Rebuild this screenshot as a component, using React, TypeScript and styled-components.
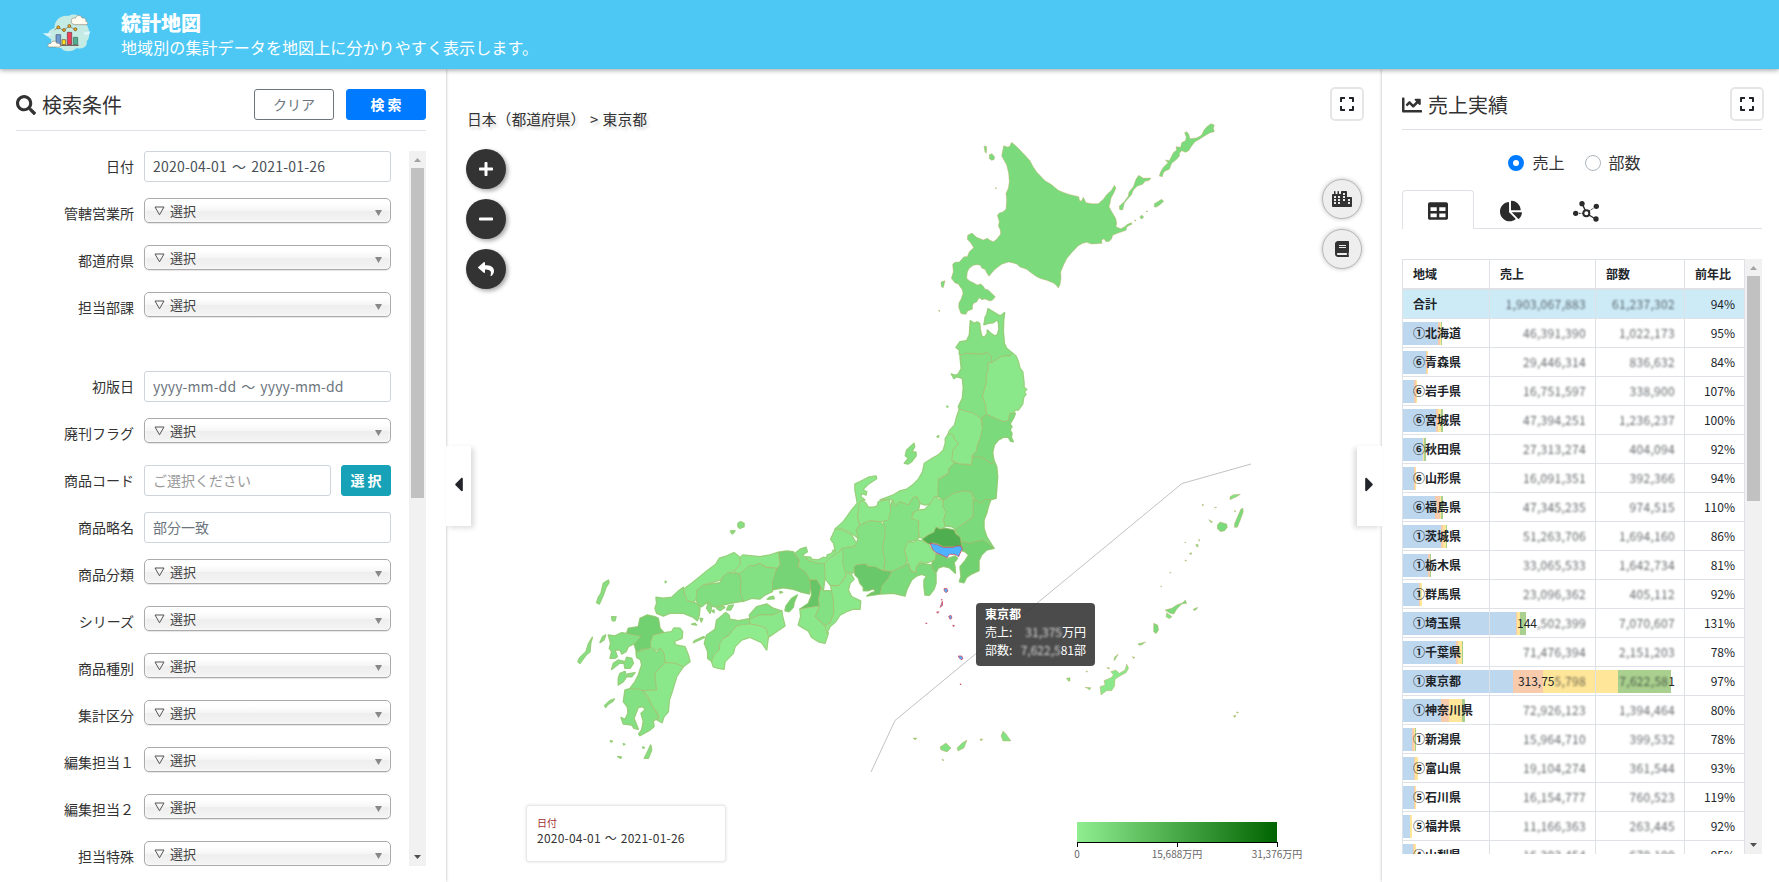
import React from 'react';
import styled, { createGlobalStyle } from 'styled-components';
import {
  FaSearch, FaPlus, FaMinus, FaReply, FaCity, FaBook, FaChartLine, FaTable,
  FaChartPie, FaExpand, FaCaretLeft, FaCaretRight,
} from 'react-icons/fa';

const Global = createGlobalStyle`
  *, *::before, *::after { box-sizing: border-box; }
  html, body { margin: 0; padding: 0; }
  body {
    font-family: "Noto Sans CJK JP", "Noto Sans", sans-serif;
    color: #333; background: #fff; overflow: hidden; font-size: 14px;
  }
  svg { display: block; }
`;

const Page = styled.div`
  width: 1779px; height: 882px; display: flex; flex-direction: column; overflow: hidden;
`;
const Header = styled.header`
  height: 69px; flex: none; display: flex; align-items: flex-start;
  padding: 8px 0 0 38px; background: #4dc8f5; color: #fff;
  box-shadow: 0 1px 5px rgba(0, 0, 0, 0.4); z-index: 3;
`;
const HeaderText = styled.div`margin-left: 23px; padding-top: 3px;`;
const AppTitle = styled.h1`margin: 0; font-size: 20px; line-height: 24px; font-weight: 900;`;
const AppLead = styled.p`margin: 0; font-size: 16px; line-height: 25px; white-space: nowrap; letter-spacing: 0.1px;`;
const Main = styled.main`flex: 1; display: flex; min-height: 0;`;

const SidePanel = styled.aside<{ $w: number; $side: 'left' | 'right' }>`
  width: ${p => p.$w}px; flex: none; position: relative; z-index: 1; background: #fff;
  padding: ${p => (p.$side === 'left' ? '18px 20px 0 16px' : '18px 17px 0 20px')};
  box-shadow: 0 0 3px rgba(0, 0, 0, 0.3);
`;
const PanelHead = styled.div<{ $h: number }>`
  height: ${p => p.$h}px; display: flex; align-items: flex-start;
  border-bottom: 1px solid #dee2e6;
`;
const PanelTitle = styled.h2<{ $gap: number }>`
  margin: 0; flex: 1; display: flex; align-items: center; gap: ${p => p.$gap}px;
  height: 35px; font-size: 20px; font-weight: 400;
`;
const Button = styled.button<{ $kind: 'outline' | 'primary' | 'info'; $w: number }>`
  width: ${p => p.$w}px; height: 31px; padding: 0 0 2px; border-radius: 3px; font: inherit;
  font-size: 14px; margin-left: ${p => (p.$kind === 'primary' ? 12 : p.$kind === 'info' ? 10 : 0)}px;
  margin-top: ${p => (p.$kind === 'info' ? 0 : 2)}px; flex: none;
  border: 1px solid ${p => ({ outline: '#6c757d', primary: '#007bff', info: '#17a2b8' })[p.$kind]};
  background: ${p => ({ outline: '#fff', primary: '#007bff', info: '#17a2b8' })[p.$kind]};
  color: ${p => (p.$kind === 'outline' ? '#6c757d' : '#fff')};
  font-weight: ${p => (p.$kind === 'outline' ? 400 : 700)};
  white-space: pre;
`;
const FormArea = styled.div`margin-top: 20px; height: 715px; display: flex; justify-content: space-between;`;
const Fields = styled.div`width: 375px; height: 715px; overflow: hidden;`;
const Field = styled.div<{ $gap?: boolean }>`
  display: flex; height: 31px; margin-bottom: ${p => (p.$gap ? 48 : 16)}px;
`;
const Label = styled.label`
  width: 118px; margin-right: 10px; flex: none; text-align: right; line-height: 31px; font-size: 14px;
`;
const TextBox = styled.div<{ $muted?: boolean; $light?: boolean; $ls?: number }>`
  flex: 1; height: 31px; border: 1px solid #ced4da; border-radius: 3px; padding: 0 8px;
  line-height: 29px; font-size: 14px; white-space: pre; letter-spacing: ${p => p.$ls ?? 0}px;
  word-spacing: 1.8px;
  color: ${p => (p.$light ? '#999' : p.$muted ? '#6c757d' : '#495057')};
`;
const SelectBox = styled.div`
  flex: 1; height: 25px; border: 1px solid #aaa; border-radius: 5px; padding: 0 8px 0 9px;
  display: flex; align-items: center; font-size: 13px; color: #444;
  background: linear-gradient(#fff 20%, #f6f6f6 50%, #eee 52%, #f4f4f4 100%);
  box-shadow: 0 0 3px #fff inset, 0 1px 1px rgba(0, 0, 0, 0.1);
`;
const SelectText = styled.span`flex: 1; margin-left: 5px; line-height: 22px;`;
const SelectCaret = styled.svg`margin-top: 5px;`;

const Bar = styled.div<{ $h: number }>`
  width: 17px; height: ${p => p.$h}px; background: #f1f1f1; display: flex;
  flex-direction: column; align-items: center; padding: 7px 0; flex: none;
`;
const Thumb = styled.div<{ $h: number }>`width: 13px; height: ${p => p.$h}px; background: #c1c1c1; margin: 6px 0 auto;`;

const SideTab = styled.button<{ $side: 'left' | 'right' }>`
  position: absolute; top: 377px; ${p => (p.$side === 'left' ? 'right: -25px' : 'left: -25px')};
  width: 25px; height: 80px; padding: 0 ${p => (p.$side === 'left' ? 1 : 0)}px 3px 0; border: 0;
  background: #fff; color: #212529;
  display: flex; align-items: center; justify-content: center; font-size: 23px;
  box-shadow: ${p => (p.$side === 'left' ? 3 : -3)}px 2px 5px rgba(0, 0, 0, 0.14);
`;

const MapPanel = styled.section`flex: 1; position: relative; display: flex; flex-direction: column;`;
const MapSvg = styled.svg`position: absolute; left: 0; top: 0;`;
const MapOverlay = styled.div`
  position: relative; height: 240px; flex: none; display: flex; justify-content: space-between;
  padding: 18px 18px 0 20px;
`;
const MapTools = styled.div`display: flex; flex-direction: column; gap: 10px;`;
const Crumbs = styled.div`
  height: 52px; flex: none; padding: 20px 0 0 1px; font-size: 14.8px; line-height: 24px; white-space: pre;
  word-spacing: 1.2px; text-shadow: 2px 3px 3px rgba(0, 0, 0, 0.16);
`;
const LayerTools = styled.div`display: flex; flex-direction: column; align-items: flex-end; gap: 10px;`;
const RoundButton = styled.button<{ $light?: boolean }>`
  width: 40px; height: 40px; flex: none; border-radius: 50%; padding: 0; display: flex;
  align-items: center; justify-content: center; font-size: 16px;
  margin-right: ${p => (p.$light ? 2 : 0)}px;
  border: ${p => (p.$light ? '1px solid #b8b8b8' : '0')};
  background: ${p => (p.$light ? '#eee' : '#333')};
  color: ${p => (p.$light ? '#333' : '#fff')};
  box-shadow: ${p => (p.$light ? '0 0 4px rgba(0,0,0,.25)' : '2px 2px 4px rgba(0,0,0,.35)')};
`;
const SquareButton = styled.button<{ $last?: boolean }>`
  width: 34px; height: 34px; border: 2px solid #e6e6e6; border-radius: 5px; background: #fff;
  display: flex; align-items: center; justify-content: center; padding: 0; font-size: 16px;
  color: #212529; flex: none; margin-right: ${p => (p.$last ? -2 : 0)}px;
`;
const LayerGap = styled.div`height: 38px; flex: none;`;
const MapFooter = styled.div`
  position: relative; margin-top: auto; height: 77px; display: flex; justify-content: space-between;
  padding: 0 80px 0 80px;
`;
const DateCard = styled.div`
  width: 200px; height: 57px; border: 1px solid #e9e9e9; border-radius: 3px; padding: 9px 10px;
  box-shadow: 0 0 3px rgba(0, 0, 0, 0.12); background: #fff;
`;
const DateLabel = styled.div`font-size: 10px; line-height: 15px; color: #a03030;`;
const DateValue = styled.div`font-size: 12px; line-height: 15px; white-space: pre; letter-spacing: 0.22px; word-spacing: 1px;`;
const Legend = styled.div`width: 245px; padding: 17px 0 0 20px; overflow: hidden;`;
const Ramp = styled.div`width: 200px; height: 20px; background: linear-gradient(to right, #90ee90, #006400);`;
const Axis = styled.div`
  width: 201px; height: 5px; border-top: 1px solid #000; display: flex; justify-content: space-between;
  & > i { width: 1px; background: #000; }
`;
const AxisLabels = styled.div`
  width: 300px; margin-left: -50px; display: grid; grid-template-columns: repeat(3, 100px);
  text-align: center; font-size: 10px; line-height: 14px; color: #666;
`;

const Tooltip = styled.div`
  position: absolute; left: 530px; top: 534px; width: 119px; height: 63px; border-radius: 4px;
  background: rgba(48, 48, 48, 0.87); color: #fff; font-size: 12px; line-height: 18px; padding: 2px 9px;
`;
const TipTitle = styled.div`font-weight: 700;`;
const TipRow = styled.div`display: flex; white-space: pre;`;
const TipHidden = styled.span`flex: 1; text-align: right; filter: blur(1.3px); opacity: 0.75;`;

const Radios = styled.div`height: 60px; display: flex; align-items: center; justify-content: center; padding: 4px 15px 0 0;`;
const Radio = styled.label<{ $on?: boolean }>`
  display: flex; align-items: center; font-size: 16px; line-height: 24px; margin-right: ${p => (p.$on ? 20 : 0)}px;
  &::before {
    content: ''; width: 16px; height: 16px; border-radius: 50%; margin: 1px 8px 0 0; background: #fff;
    border: ${p => (p.$on ? '5px solid #007bff' : '1px solid #adb5bd')};
  }
`;
const Tabs = styled.div`height: 39px; display: flex; border-bottom: 1px solid #dee2e6; width: 360px;`;
const Tab = styled.button<{ $on?: boolean; $w: number; $size?: number }>`
  width: ${p => p.$w}px; height: 39px; display: flex; align-items: center; justify-content: center;
  background: ${p => (p.$on ? '#fff' : 'transparent')}; font-size: ${p => p.$size ?? 20}px; color: #2b2b2b;
  border: 1px solid ${p => (p.$on ? '#dee2e6' : 'transparent')}; border-bottom: 0;
  border-radius: 4px 4px 0 0; padding: 2px 0 0;
`;
const TableArea = styled.div`margin-top: 30px; height: 595px; display: flex; overflow: hidden; width: 360px;`;
const Grid = styled.div`width: 343px; border-left: 1px solid #dee2e6; border-top: 1px solid #dee2e6;`;
const Row = styled.div<{ $kind?: 'head' | 'total' }>`
  position: relative; display: grid; grid-template-columns: 87px 106px 89px 60px;
  height: ${p => (p.$kind === 'head' ? 30 : 29)}px; overflow: hidden;
  background: ${p => (p.$kind === 'total' ? '#cdebf7' : 'transparent')};
`;
const Cell = styled.div<{ $right?: boolean; $bold?: boolean; $head?: boolean }>`
  position: relative; border-right: 1px solid #dee2e6; border-bottom: ${p => (p.$head ? 2 : 1)}px solid #dee2e6;
  padding: 0 ${p => (p.$right ? 9 : 0)}px 0 10px; font-size: 12px; line-height: 27px; white-space: nowrap;
  text-align: ${p => (p.$right ? 'right' : 'left')}; font-weight: ${p => (p.$bold ? 700 : 400)};
  color: #212529;
`;
const Masked = styled.span`display: inline-block; filter: blur(1.3px); opacity: 0.7; letter-spacing: 0.3px;`;
const Stack = styled.div`position: absolute; left: 0; top: 3px; height: 23px; display: flex;`;
const Segment = styled.i<{ $w: number; $c: string }>`width: ${p => p.$w}px; background: ${p => p.$c};`;

const SEG = ['#bdd7ee', '#f8cbad', '#ffe699', '#a9d08e'];

type RowData = [string, string, string, string, number[]];
const ROWS: RowData[] = [
  ['①北海道', '46,391,390', '1,022,173', '95%', [35.3, 1.3, 1.2, 1.5]],
  ['⑥青森県', '29,446,314', '836,632', '84%', [23.3, 0.4, 1, 0]],
  ['⑥岩手県', '16,751,597', '338,900', '107%', [11.3, 1.3, 1, 0]],
  ['⑥宮城県', '47,394,251', '1,236,237', '100%', [33, 1.7, 3.7, 1.6]],
  ['⑥秋田県', '27,313,274', '404,094', '92%', [20.3, 0, 0.7, 1.7]],
  ['⑥山形県', '16,091,351', '392,366', '94%', [11, 1, 1, 0]],
  ['⑥福島県', '47,345,235', '974,515', '110%', [32.3, 5, 1, 1.7]],
  ['①茨城県', '51,263,706', '1,694,160', '86%', [38.3, 2, 2.4, 0.4]],
  ['①栃木県', '33,065,533', '1,642,734', '81%', [24.7, 2, 0.4, 0.8]],
  ['①群馬県', '23,096,362', '405,112', '92%', [16.3, 0.4, 2.3, 0]],
  ['①埼玉県', '144|,502,399', '7,070,607', '131%', [112.7, 1.3, 3, 5.7]],
  ['①千葉県', '71,476,394', '2,151,203', '78%', [53, 2, 4, 1.3]],
  ['①東京都', '313,75|5,798', '7,622,58|1', '97%', [110.3, 30, 75, 52.7]],
  ['①神奈川県', '72,926,123', '1,394,464', '80%', [38.3, 7.3, 13.7, 2.3]],
  ['①新潟県', '15,964,710', '399,532', '78%', [9.3, 1.3, 1.5, 0.8]],
  ['⑤富山県', '19,104,274', '361,544', '93%', [11, 1, 3.3, 0]],
  ['⑤石川県', '16,154,777', '760,523', '119%', [11.3, 1, 0.4, 0]],
  ['⑤福井県', '11,166,363', '263,445', '92%', [7, 0.3, 1.6, 0]],
  ['④山梨県', '16,303,454', '670,100', '95%', [10.3, 1, 1.6, 0]],
];

const Figure = ({ value }: { value: string }) => {
  const [a, b] = value.split('|');
  if (b === undefined) return <Masked>{a}</Masked>;
  if (b.length === 1) return <><Masked>{a}</Masked>{b}</>;
  return <>{a}<Masked>{b}</Masked></>;
};

const Arrow = ({ up }: { up?: boolean }) => (
  <svg width="7" height="4" viewBox="0 0 7 4">
    <path d={up ? 'M0 4L3.5 0L7 4Z' : 'M0 0L3.5 4L7 0Z'} fill={up ? '#a3a3a3' : '#505050'} />
  </svg>
);
const Scrollbar = ({ h, thumb }: { h: number; thumb: number }) => (
  <Bar $h={h}><Arrow up /><Thumb $h={thumb} /><Arrow /></Bar>
);

const Select = () => (
  <SelectBox>
    <svg width="11" height="10" viewBox="0 0 11 10"><path d="M1 1H10L5.5 8.8Z" fill="none" stroke="#555" /></svg>
    <SelectText>選択</SelectText>
    <SelectCaret width="7" height="6" viewBox="0 0 7 6"><path d="M0 0H7L3.5 6Z" fill="#888" /></SelectCaret>
  </SelectBox>
);

const Logo = () => (
  <svg width="60" height="54" viewBox="0 0 180 162">
    <path d="M50 60C48 38 68 20 92 24C115 10 140 32 144 48C158 66 156 92 146 100C150 116 132 126 116 120C102 134 76 132 70 120C48 122 36 108 40 94C24 88 26 66 50 60Z" fill="#c5ebe5" />
    <path d="M14 76H34L44 82H34L30 86Z M136 74L158 70L152 80H140Z" fill="#dff6fb" />
    <path d="M100 40C98 32 106 28 112 31C114 20 130 20 132 30C142 28 146 36 143 40C152 42 150 50 144 50H110C102 48 98 44 100 40Z" fill="#fffdf2" stroke="#8d8878" strokeWidth="2" />
    <path d="M54 80H68V110H54Z" fill="#6d9bd1" stroke="#4d5570" strokeWidth="2" />
    <path d="M72 95H83V110H72Z" fill="#ffdf20" stroke="#5b5030" strokeWidth="2" />
    <path d="M88 73H101V110H88Z" fill="#ed3d57" stroke="#6b3440" strokeWidth="2" />
    <path d="M106 88H119V110H106Z" fill="#4fae8d" stroke="#3c6355" strokeWidth="2" />
    <path d="M42 112H122" stroke="#6a5349" strokeWidth="3" />
    <path d="M50 66L61 58L77 68L94 54L112 66L118 62" fill="none" stroke="#75664c" strokeWidth="2" />
    {[[61, 58], [78, 66], [94, 54], [112, 64]].map(([x, y]) => (
      <circle key={x} cx={x} cy={y} r="4.5" fill="#f0a51c" stroke="#6d531e" strokeWidth="2" />
    ))}
    <path d="M30 112C30 106 36 106 38 107C42 96 54 98 56 106C64 104 70 112 66 117H34C28 116 28 113 30 112Z" fill="#fffdf2" stroke="#8d8878" strokeWidth="2" />
  </svg>
);

const NetworkIcon = () => (
  <svg width="26" height="21" viewBox="0 0 78 63" fill="#2b2b2b" stroke="#2b2b2b">
    <path d="M30 14L37 28M48 42L68 54" strokeWidth="4" fill="none" />
    <path d="M18 37H30M48 30L64 20" strokeWidth="3" strokeDasharray="5 3" fill="none" />
    <circle cx="40" cy="37" r="9" fill="none" strokeWidth="6" />
    <g stroke="none">
      <circle cx="27" cy="8" r="8" /><circle cx="8" cy="37" r="8" />
      <circle cx="70" cy="16" r="8" /><circle cx="69" cy="54" r="8" />
    </g>
  </svg>
);

const L = '#8ae88a', M = '#83e083', D = '#7bda7b', E = '#71d171';
type Shape = [string, string];

const NORTH: Shape[] = [
  [D, '245,97 258,108 270,120 285,136 300,152 308,168 320,186 345,212 363,223 385,241 402,248 420,254 446,260 449,273 455,272 460,262 468,278 485,281 505,281 520,268 530,254 545,240 553,226 558,234 551,250 543,264 540,280 537,290 548,310 557,325 560,340 558,350 572,356 584,350 592,343 604,338 606,343 596,347 590,352 588,361 562,370 548,376 545,386 538,394 528,395 522,386 515,391 516,400 500,401 485,402 470,397 458,400 445,407 425,428 411,445 402,462 392,486 393,505 390,524 385,534 378,525 370,519 350,511 333,506 320,500 303,488 290,478 270,471 261,463 250,459 235,456 215,463 199,475 190,483 177,499 171,490 165,478 156,475 150,465 140,464 130,466 118,475 112,486 110,505 118,512 130,518 142,525 152,522 160,529 165,537 175,540 185,550 196,560 188,570 180,573 165,567 155,569 148,563 140,576 131,580 128,585 127,598 113,603 108,613 97,612 92,609 86,592 87,578 93,568 99,550 96,538 90,530 85,522 75,519 64,505 70,485 68,463 74,457 88,456 95,448 102,440 112,440 118,425 131,413 122,398 112,388 113,376 126,369 133,376 140,382 160,390 172,385 180,391 190,395 200,388 212,372 211,360 205,348 208,335 202,316 208,309 218,306 228,298 230,270 228,250 235,235 238,215 236,190 230,165 215,138 221,107 232,111 238,110'],
  [D, '843,41 853,45 850,55 853,65 840,68 820,80 808,88 795,95 785,108 776,122 767,127 755,122 748,130 749,137 740,148 725,160 718,178 707,182 700,188 697,200 688,198 692,185 700,172 714,158 706,150 718,152 730,128 740,120 738,110 752,112 755,98 766,92 769,82 764,68 770,65 776,72 780,86 800,84 815,75 822,60 832,49'],
  [D, '626,196 640,205 662,204 658,211 645,214 638,223 622,228 610,240 604,255 592,268 583,280 578,300 569,299 568,288 582,276 595,258 597,246 610,230 618,208'],
  [D, '673,281 695,268 701,274 690,284 678,292 673,290'],
  [D, '162,108 170,110 169,130 165,126'], [D, '178,134 186,131 194,141 192,149 184,151 178,145'],
  [D, '33,516 45,512 40,533 34,530'], [D, '629,322 635,315 641,321 636,327'],
  [D, '195,234 199,233 198,237'], [D, '25,601 30,602 28,605'], [D, '613,330 618,331 616,334'], [D, '648,303 653,303 651,306'],
];

const EAST: Shape[] = [
  [M, '511,62 522,70 531,66 539,70 540,85 545,108 553,112 562,100 562,90 575,102 585,108 592,104 597,88 595,66 590,60 580,68 565,70 552,74 556,50 560,45 564,26 580,36 600,48 614,38 611,60 610,95 613,130 620,145 638,160 630,168 612,168 600,172 585,182 575,188 570,180 574,170 562,158 540,163 520,160 500,160 485,166 478,162 478,150 468,142 480,125 500,122 508,105 510,80'],
  [M, '480,166 500,160 540,163 562,158 574,170 575,185 565,190 564,210 558,230 560,245 553,270 548,290 556,312 560,343 549,350 542,355 520,340 500,334 478,328 475,320 487,295 490,262 487,235 470,230 462,236 454,222 465,226 475,222 484,205 482,190'],
  [L, '638,160 648,168 655,185 660,205 668,215 670,230 672,250 672,262 680,268 673,276 678,283 671,292 668,312 655,330 645,330 640,342 630,340 625,362 612,365 600,361 590,358 580,352 560,343 556,312 548,290 553,270 560,245 558,230 564,210 565,190 575,188 585,182 600,172 612,168 630,168'],
  [D, '630,340 646,340 642,352 630,372 636,380 630,390 636,400 634,412 640,425 632,424 625,412 610,412 595,420 583,435 578,458 582,482 575,492 560,480 545,472 522,472 518,462 528,455 532,435 540,415 545,385 547,362 542,355 560,343 580,352 600,361 612,365 625,362'],
  [L, '478,328 500,334 520,340 542,355 547,385 540,415 532,435 528,455 516,465 515,495 500,492 478,492 465,485 455,482 458,450 476,430 465,420 458,403 445,402 448,392 464,375 470,350'],
  [L, '445,402 458,403 465,420 476,430 458,450 455,482 463,488 447,505 445,520 415,535 417,560 415,590 405,588 398,600 390,612 375,615 360,610 350,590 340,592 325,615 300,605 285,618 278,600 268,598 240,600 280,585 300,573 320,568 340,553 355,538 368,515 373,490 395,476 415,465 430,450 436,430 436,415'],
  [D, '463,488 478,492 515,495 518,470 545,472 575,492 582,482 590,500 593,530 590,570 588,595 570,600 555,598 545,610 525,600 520,585 515,577 495,572 460,580 430,600 415,590 413,570 415,540 445,522 447,505'],
  [M, '430,600 460,580 495,572 515,577 520,600 520,650 500,665 485,675 470,690 455,680 435,678 430,660 438,635 428,620'],
  [D, '520,600 525,600 545,610 555,598 572,600 565,620 560,640 552,660 552,685 560,710 582,745 565,735 550,720 530,724 510,730 485,724 465,690 485,675 500,665 520,650'],
  [L, '405,588 415,598 430,600 428,620 438,635 430,660 435,680 425,686 408,682 402,697 385,705 370,715 358,712 355,685 357,664 340,662 335,652 345,632 375,628 390,612'],
  ['#4fae4f', '408,682 420,688 435,685 462,690 467,702 480,712 485,738 460,740 430,740 415,732 400,728 385,732 367,718 385,705 402,697'],
  [E, '485,724 510,730 530,724 550,720 582,745 560,750 545,765 537,782 537,812 515,822 500,832 492,848 478,845 483,830 480,800 495,782 506,765 495,755 486,752'],
  [E, '407,762 425,765 442,776 465,768 473,775 462,788 465,800 466,820 458,812 448,803 430,799 415,804 408,818 395,805 396,790 400,782'],
  [L, '320,725 340,728 350,720 365,722 385,732 395,748 407,762 405,780 375,790 360,785 350,800 345,818 332,810 322,780 313,750'],
  [M, '285,618 300,605 325,615 340,592 352,590 360,610 355,630 338,638 335,655 355,662 357,712 350,720 325,725 313,750 320,775 318,795 290,808 275,815 252,810 255,780 247,745 255,700 250,665 268,640 272,618 278,600'],
  [L, '235,605 268,598 272,630 265,660 240,665 210,662 180,675 173,655 175,615 185,600 198,610 205,622 220,622 232,618'],
  [L, '228,528 230,536 205,552 188,570 200,575 198,585 185,580 182,590 195,600 185,600 178,610 172,650 178,675 168,690 175,715 155,700 125,685 105,688 130,665 155,630 172,610 170,598 165,570 165,552 180,545 205,532'],
  [M, '180,675 210,662 240,665 255,680 255,700 247,745 255,780 250,812 225,805 195,792 170,795 158,820 135,815 128,790 130,765 125,745 165,740 175,715 168,690'],
  ['#69c869', '162,800 170,795 195,792 205,800 225,800 248,812 275,815 265,835 248,855 240,882 200,888 215,878 225,875 222,866 205,872 190,872 190,862 180,850 175,835 165,825'],
  [D, '275,815 290,808 318,795 325,790 332,812 347,820 350,800 360,790 395,795 396,805 408,822 408,850 402,868 388,886 375,885 372,860 372,840 380,828 365,823 350,828 335,840 320,870 315,888 280,880 240,882 245,858 265,835'],
  [M, '342,430 344,440 336,455 348,457 348,468 335,485 325,492 313,490 325,475 316,467 320,450'],
  [M, '411,410 416,407 415,412'], [M, '441,318 444,320 441,321'],
];

const WEST: Shape[] = [
  [L, '827,85 845,90 875,105 892,135 845,145 835,160 815,170 795,195 775,190 745,182 738,170 752,172 755,178 775,180 790,172 800,174 802,165 815,160 820,150 827,158 821,130 812,118'],
  [L, '838,156 845,145 855,180 857,225 845,245 835,258 810,255 795,235 793,190 815,170'],
  [M, '705,160 720,148 738,142 742,155 728,165 745,182 775,190 793,190 795,235 790,272 783,265 770,240 750,240 735,215 715,205 718,180'],
  ['#76d476', '655,157 680,153 700,155 710,172 718,180 712,200 735,215 750,240 752,262 748,282 720,275 700,268 670,263 635,270 637,240 645,215 660,195'],
  ['#66c566', '750,240 770,240 783,262 775,300 778,318 750,322 720,327 745,310 755,285 752,262'],
  [E, '712,285 702,308 700,322 687,335 675,332 678,318 695,295'],
  [M, '783,262 790,272 815,272 820,300 822,340 810,370 795,377 765,350 778,318 775,300'],
  [L, '720,327 750,322 778,318 765,350 780,365 795,377 798,385 805,400 795,430 775,425 755,412 745,393 715,375 722,350'],
  [L, '857,217 875,225 882,238 870,250 865,270 875,290 902,303 900,328 880,327 860,335 840,345 827,365 810,380 800,400 795,375 810,370 822,340 820,300 815,272 812,257 835,258 857,235'],
  [L, '540,174 548,165 600,170 630,165 655,157 660,195 650,205 620,200 600,190 570,200 538,222 520,215 540,195'],
  [L, '478,175 500,168 522,158 540,172 540,195 520,215 505,218 480,240 430,255 410,272 412,290 400,308 380,300 370,268 395,250 420,230 440,213 468,192'],
  [M, '538,222 555,208 570,195 578,198 600,190 615,202 650,205 637,245 637,275 615,285 600,297 575,295 548,305 540,275 543,245'],
  ['#80dd80', '410,270 430,255 480,248 490,228 505,218 538,222 543,245 540,275 550,303 520,308 490,315 470,322 455,318 440,308 425,320 415,315 408,300'],
  [M, '370,262 372,280 383,303 405,308 420,318 418,345 412,362 400,352 370,340 330,340 310,348 290,340 285,325 290,310 288,292 310,295 335,292 355,273'],
  [M, '497,338 507,345 510,358 535,362 568,356 572,374 530,378 507,404 490,415 480,432 478,450 460,470 460,488 443,475 443,455 433,430 440,405 465,388 470,360'],
  [M, '568,345 590,320 620,312 640,325 665,333 640,345 600,345 570,357'],
  [L, '568,357 600,345 640,345 665,332 668,350 675,378 650,395 625,412 618,385 600,378 570,372'],
  ['#8eec8e', '530,378 548,374 570,372 600,378 618,385 625,410 620,450 605,428 570,412 545,420 525,440 520,460 495,485 492,508 475,505 460,500 455,485 462,465 478,450 480,430 490,415 505,408'],
  [E, '240,355 262,345 285,350 295,355 300,385 312,398 280,405 272,425 275,445 245,448 230,458 222,430 240,410 200,400 205,385 235,380'],
  [M, '145,405 165,408 185,398 243,408 225,430 205,440 198,455 185,462 180,450 165,450 172,470 165,475 150,475 155,455 148,445 152,430'],
  [M, '175,480 195,485 200,472 215,475 220,490 210,505 195,505 192,490 178,490 155,508 160,490'],
  [L, '280,405 312,398 335,395 342,384 360,385 368,395 366,415 342,425 348,435 375,440 385,465 390,485 370,500 345,490 315,488 312,460 302,445 290,450 272,445 272,425'],
  [M, '228,458 250,450 275,442 290,458 302,445 312,460 315,488 285,520 290,570 250,572 210,565 225,545 235,525 245,495 242,480 230,472'],
  [M, '180,520 195,514 200,530 190,545 175,555 175,535'], [M, '203,522 225,518 215,530 203,530'],
  [L, '315,488 345,490 370,500 350,530 335,580 328,600 325,635 312,650 306,668 292,660 297,650 290,635 275,615 265,590 250,572 290,570 285,520'],
  [M, '195,570 215,565 240,567 252,578 275,615 290,640 297,655 280,662 282,680 270,690 240,707 236,702 245,690 250,665 243,640 255,630 250,620 235,622 222,655 235,688 222,685 215,675 190,672 183,652 195,658 204,640 202,620 190,605'],
  [M, '272,735 275,750 265,775 253,775 263,755'],
  [M, '145,240 147,248 138,262 130,285 118,312 110,308 115,292 123,280 130,250'],
  [M, '155,350 168,350 165,362 157,362'],
  [M, '534,70 542,65 552,70 552,80 540,85 534,80'], [M, '511,93 525,92 522,97 517,102'],
  [M, '97,412 92,430 90,455 78,465 60,490 54,485 58,475 78,455 86,430'],
  [M, '137,405 132,420 120,428 128,410'],
  [M, '163,597 158,604 142,615 137,622 134,617 150,602'],
  [M, '435,412 400,428 404,422 430,410'],
  [M, '640,289 643,296 622,298 628,292'], [M, '520,315 512,330 500,330 505,318'], [M, '495,322 480,332 470,325 485,318'],
  [M, '445,305 455,320 450,340 440,325'], [M, '420,355 428,356 424,366'], [M, '455,333 462,330 462,338'],
  [M, '316,243 319,246 316,248'], [M, '151,722 157,724 153,726'], [M, '190,731 195,733 191,734'], [M, '173,770 184,771 182,775'], [M, '248,741 253,743 250,745'],
  [M, '660,274 668,277 660,279'], [M, '395,373 405,370 410,375'],
];

const SOUTH: Shape[] = [
  [M, '600,170 610,164 631,163 620,170 600,179'], [D, '638,204 640,215 633,235 625,255 622,262 613,262 614,250 625,225 632,208'],
  [D, '562,255 570,246 590,252 592,262 584,272 572,275 562,266'], [M, '536,239 548,245 543,248'], [M, '497,314 503,312 505,320 500,320'],
  [M, '506,298 510,300 507,304'], [M, '478,340 485,338 483,345'], [M, '516,193 521,194 518,198'], [M, '464,361 470,361 468,364'],
  [D, '466,480 470,490 455,492 440,508 432,522 420,520 405,510 425,505 440,495 458,488'], [M, '410,518 426,530 418,536 408,530'],
  [M, '489,508 503,502 500,508 493,512'], [D, '371,550 383,555 386,570 378,581 371,575'], [M, '324,611 347,606 335,615 327,616'],
  [M, '307,650 315,652 311,656'], [M, '265,642 253,652 252,662 256,658'],
  [L, '290,672 296,685 288,698 270,708 255,718 254,738 245,752 230,752 213,765 210,740 225,735 222,722 245,712 250,704 242,695 258,690 268,700 285,690'],
  [M, '230,682 240,684 236,687'], [M, '109,715 120,713 120,724 115,723'], [M, '168,693 173,694 170,697'], [M, '165,742 183,743 178,750 172,745'],
  [M, '610,827 618,826 614,833'], [M, '619,816 626,817 622,820'], [M, '419,397 423,397 421,400'], [M, '392,438 396,439 393,441'],
  [M, '613,212 618,213 615,216'], [M, '553,202 560,202 556,204'], [M, '464,306 468,307 466,309'],
];

// Sakishima group, drawn in map pixels.
const FAR: Shape[] = [
  [M, '940,747 946,743 951,748 947,752 941,750'], [M, '957,748 962,743 967,740 964,748 958,751'], [M, '913,738 917,738 915,740'],
  [M, '1003,731 1006,734 1011,741 1003,741 1001,736'], [M, '980,739 983,739 981,741'], [M, '942,759 944,760 943,761'],
];

const TOKYO: string[] = [
  '450,160 470,163 490,172 520,172 530,168 543,168 547,177 542,186 536,200 530,196 522,193 508,193 502,203 485,195 468,188 458,178',
  '492,296 500,295 504,303 498,308 493,303', '506,379 513,376 516,384 510,388', '518,406 523,406 521,410',
  '535,498 545,498 549,506 543,509 537,503', '484,343 487,334 488,346 480,352', '470,366 476,365 473,370', '484,328 487,329 485,331',
  '437,399 441,400 439,402', '540,582 543,582 542,585',
];

type LayerProps = { x: number; y: number; shapes: Shape[]; s?: number; base?: boolean };
const Layer = ({ x, y, shapes, s = 3, base }: LayerProps) => (
  <g transform={`translate(${x} ${y}) scale(${1 / s})`} strokeLinejoin="round">
    {base && (
      <g stroke="#86e386" strokeWidth="4.5">
        {shapes.map(([fill, points]) => <polygon key={points} fill={fill} points={points} />)}
      </g>
    )}
    <g stroke="#c4a968" strokeOpacity="0.7" strokeWidth={1.8 * s / 3}>
      {shapes.map(([fill, points]) => <polygon key={points} fill={fill} points={points} />)}
    </g>
  </g>
);

const JapanMap = () => (
  <MapSvg width="936" height="813" viewBox="446 69 936 813">
    <polyline points="1251,464 1182,483.5 895,720.5 871,772" fill="none" stroke="#c2c2c2" />
    <Layer x={930} y={110} shapes={NORTH} />
    <Layer x={560} y={500} shapes={WEST} base />
    <Layer x={800} y={300} shapes={EAST} base />
    <Layer x={1030} y={440} shapes={SOUTH} />
    <Layer x={0} y={0} s={1} shapes={FAR} />
    <g transform="translate(780 490) scale(0.33333)" fill="#4db2ff" stroke="#dc3c50" strokeWidth="2.2">
      {TOKYO.map(points => <polygon key={points} points={points} />)}
    </g>
  </MapSvg>
);

type FieldDef = { label: string; kind?: 'text' | 'code'; text?: string; muted?: boolean; gap?: boolean; ls?: number };
const FIELDS: FieldDef[] = [
  { label: '日付', kind: 'text', text: '2020-04-01 ～ 2021-01-26', ls: 0.2 },
  { label: '管轄営業所' }, { label: '都道府県' }, { label: '担当部課', gap: true },
  { label: '初版日', kind: 'text', text: 'yyyy-mm-dd ～ yyyy-mm-dd', muted: true, ls: 0.1 },
  { label: '廃刊フラグ' }, { label: '商品コード', kind: 'code', text: 'ご選択ください' },
  { label: '商品略名', kind: 'text', text: '部分一致', muted: true },
  { label: '商品分類' }, { label: 'シリーズ' }, { label: '商品種別' }, { label: '集計区分' },
  { label: '編集担当１' }, { label: '編集担当２' }, { label: '担当特殊' },
];

export default function App() {
  return (
    <Page>
      <Global />
      <Header>
        <Logo />
        <HeaderText>
          <AppTitle>統計地図</AppTitle>
          <AppLead>地域別の集計データを地図上に分かりやすく表示します。</AppLead>
        </HeaderText>
      </Header>
      <Main>
        <SidePanel $w={446} $side="left">
          <PanelHead $h={44}>
            <PanelTitle $gap={6}><FaSearch />検索条件</PanelTitle>
            <Button $kind="outline" $w={80}>クリア</Button>
            <Button $kind="primary" $w={80}>検 索</Button>
          </PanelHead>
          <FormArea>
            <Fields>
              {FIELDS.map(f => (
                <Field key={f.label} $gap={f.gap}>
                  <Label>{f.label}</Label>
                  {!f.kind && <Select />}
                  {f.kind === 'text' && <TextBox $muted={f.muted} $ls={f.ls}>{f.text}</TextBox>}
                  {f.kind === 'code' && <><TextBox $light>{f.text}</TextBox><Button $kind="info" $w={50}>選 択</Button></>}
                </Field>
              ))}
            </Fields>
            <Scrollbar h={715} thumb={330} />
          </FormArea>
          <SideTab $side="left"><FaCaretLeft /></SideTab>
        </SidePanel>

        <MapPanel>
          <JapanMap />
          <MapOverlay>
            <MapTools>
              <Crumbs>{'日本（都道府県） > 東京都'}</Crumbs>
              <RoundButton><FaPlus /></RoundButton>
              <RoundButton><FaMinus /></RoundButton>
              <RoundButton><FaReply /></RoundButton>
            </MapTools>
            <LayerTools>
              <SquareButton><FaExpand /></SquareButton>
              <LayerGap />
              <RoundButton $light><FaCity size={20} /></RoundButton>
              <RoundButton $light><FaBook /></RoundButton>
            </LayerTools>
          </MapOverlay>
          <Tooltip>
            <TipTitle>東京都</TipTitle>
            <TipRow>売上: <TipHidden>31,375</TipHidden>万円</TipRow>
            <TipRow>部数: <TipHidden>7,622,5</TipHidden>81部</TipRow>
          </Tooltip>
          <MapFooter>
            <DateCard>
              <DateLabel>日付</DateLabel>
              <DateValue>2020-04-01 ～ 2021-01-26</DateValue>
            </DateCard>
            <Legend>
              <Ramp />
              <Axis><i /><i /><i /></Axis>
              <AxisLabels><span>0</span><span>15,688万円</span><span>31,376万円</span></AxisLabels>
            </Legend>
          </MapFooter>
        </MapPanel>

        <SidePanel $w={397} $side="right">
          <PanelHead $h={43}>
            <PanelTitle $gap={6}><FaChartLine />売上実績</PanelTitle>
            <SquareButton $last><FaExpand /></SquareButton>
          </PanelHead>
          <Radios><Radio $on>売上</Radio><Radio>部数</Radio></Radios>
          <Tabs>
            <Tab $on $w={72}><FaTable /></Tab>
            <Tab $w={73} $size={22}><FaChartPie /></Tab>
            <Tab $w={78}><NetworkIcon /></Tab>
          </Tabs>
          <TableArea>
            <Grid>
              <Row $kind="head">
                {['地域', '売上', '部数', '前年比'].map(h => <Cell key={h} $bold $head>{h}</Cell>)}
              </Row>
              <Row $kind="total">
                <Cell $bold>合計</Cell>
                <Cell $right><Figure value="1,903,067,883" /></Cell>
                <Cell $right><Figure value="61,237,302" /></Cell>
                <Cell $right>94%</Cell>
              </Row>
              {ROWS.map(([name, sales, copies, rate, segs]) => (
                <Row key={name}>
                  <Stack>{segs.map((w, i) => <Segment key={i} $w={w} $c={SEG[i]} />)}</Stack>
                  <Cell $bold>{name}</Cell>
                  <Cell $right><Figure value={sales} /></Cell>
                  <Cell $right><Figure value={copies} /></Cell>
                  <Cell $right>{rate}</Cell>
                </Row>
              ))}
            </Grid>
            <Scrollbar h={595} thumb={225} />
          </TableArea>
          <SideTab $side="right"><FaCaretRight /></SideTab>
        </SidePanel>
      </Main>
    </Page>
  );
}
